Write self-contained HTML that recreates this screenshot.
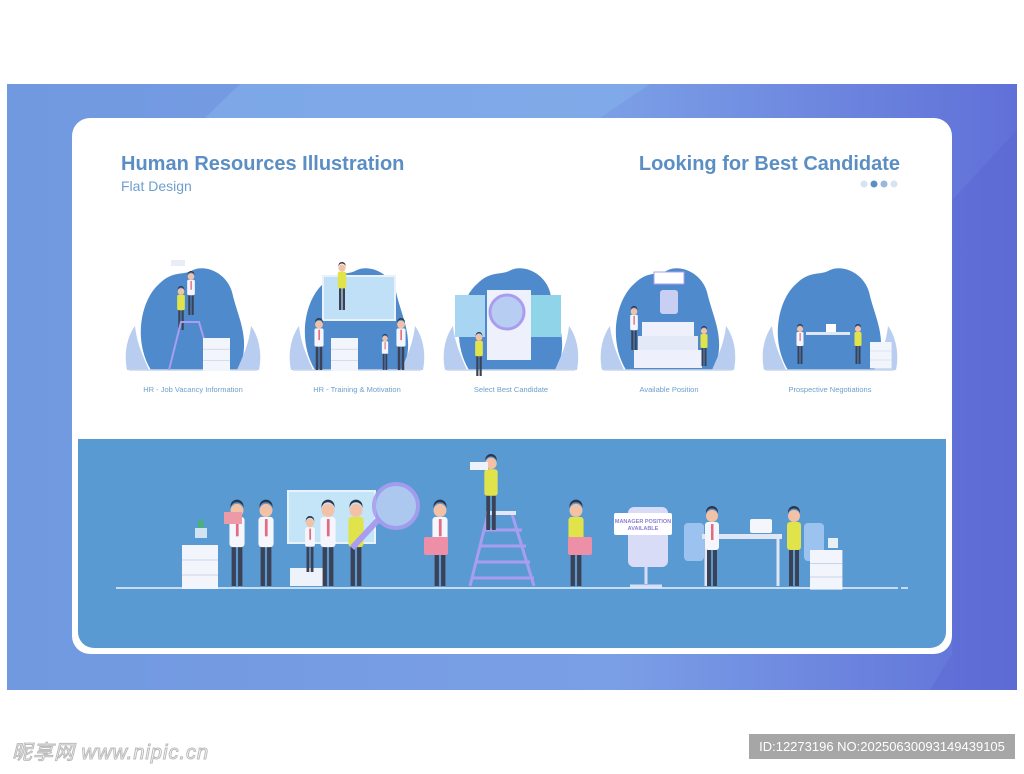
<!DOCTYPE html>
<html><head><meta charset="utf-8"><style>
html,body{margin:0;padding:0;background:#fff;width:1024px;height:774px;overflow:hidden;font-family:"Liberation Sans",sans-serif}
.wm{position:absolute;left:12px;top:736px;font-family:"Liberation Sans","Noto Sans CJK SC",sans-serif;font-size:20px;color:#fff;-webkit-text-stroke:1px #bbb;font-style:italic;letter-spacing:1px}
.id{position:absolute;left:749px;top:734px;width:266px;height:25px;background:#a6a6a6;color:#fff;font-size:13px;line-height:25px;text-align:center}
</style></head><body>
<svg width="1024" height="774" style="position:absolute;left:0;top:0" xmlns="http://www.w3.org/2000/svg">
<defs>
<linearGradient id="bg" x1="0" x2="1" y1="0" y2="0"><stop offset="0" stop-color="#7099e0"/><stop offset="0.6" stop-color="#7b9fe6"/><stop offset="1" stop-color="#6070d8"/></linearGradient>
<g id="p"><!-- person -->
<rect x="-5" y="-38" width="4" height="38" fill="#3b4256"/><rect x="1" y="-38" width="4" height="38" fill="#3b4256"/>
<rect x="-7" y="-64" width="14" height="28" rx="3" fill="#f4f6fb"/>
<rect x="-1" y="-62" width="2.5" height="16" fill="#e46a82"/>
<circle cx="0" cy="-70" r="6" fill="#f3c2a6"/><path d="M-6,-71 a6,6 0 0 1 12,-1 l0,-2 a6,6 0 0 0 -12,0z" fill="#2f3548"/>
</g>
<g id="py">
<rect x="-5" y="-38" width="4" height="38" fill="#3b4256"/><rect x="1" y="-38" width="4" height="38" fill="#3b4256"/>
<rect x="-7" y="-64" width="14" height="28" rx="3" fill="#e0e34a"/>
<circle cx="0" cy="-70" r="6" fill="#f3c2a6"/><path d="M-6,-71 a6,6 0 0 1 12,-1 l0,-2 a6,6 0 0 0 -12,0z" fill="#2f3548"/>
</g>
<g id="drw"><rect x="0" y="0" width="36" height="44" fill="#f2f5fb"/><line x1="0" y1="15" x2="36" y2="15" stroke="#c9d4e8"/><line x1="0" y1="30" x2="36" y2="30" stroke="#c9d4e8"/></g>
<g id="blob"><path d="M-42,50 C-60,20 -52,-20 -34,-36 C-20,-50 -10,-44 0,-50 C14,-56 36,-46 40,-24 C46,0 58,20 46,50Z" fill="#4f8bcc"/>
<path d="M-66,50 C-70,30 -64,14 -58,6 C-56,24 -50,36 -44,50Z" fill="#b8cdf0"/><path d="M66,50 C70,30 64,14 58,6 C56,24 50,36 44,50Z" fill="#b8cdf0"/>
<line x1="-64" y1="50" x2="64" y2="50" stroke="#c9d6ea" stroke-width="1.5"/></g>
</defs>
<rect x="7" y="84" width="1010" height="606" fill="url(#bg)"/>
<path d="M240,84 L650,84 L600,118 L205,118Z" fill="#86b3ec" opacity="0.5"/>
<path d="M952,200 L1017,130 L1017,690 L930,690 L952,654Z" fill="#5a63d2" opacity="0.4"/>
<rect x="72" y="118" width="880" height="536" rx="18" fill="#fff"/>
<path d="M78,439 H946 V632 a16,16 0 0 1 -16,16 H94 a16,16 0 0 1 -16,-16Z" fill="#5a9ad3"/>
<text x="121" y="170" font-size="20" font-weight="bold" fill="#5b8fc4">Human Resources Illustration</text>
<text x="121" y="191" font-size="14" fill="#6d9fce">Flat Design</text>
<text x="900" y="170" font-size="20" font-weight="bold" fill="#5b8fc4" text-anchor="end">Looking for Best Candidate</text>
<circle cx="864" cy="184" r="3.5" fill="#d6e3f3"/><circle cx="874" cy="184" r="3.5" fill="#5b8fc4"/><circle cx="884" cy="184" r="3.5" fill="#98b8de"/><circle cx="894" cy="184" r="3.5" fill="#d6e3f3"/>
<!-- small scenes -->
<g transform="translate(193,320)"><use href="#blob"/><use href="#py" transform="translate(-12,10) scale(0.55)"/><use href="#p" transform="translate(-2,-5) scale(0.55)"/><path d="M-24,50 L-12,2 L6,2 L20,50" stroke="#a99df0" stroke-width="2" fill="none"/><use href="#drw" transform="translate(10,18) scale(0.75)"/><rect x="-22" y="-60" width="14" height="6" fill="#e8edf7"/></g>
<g transform="translate(357,320)"><use href="#blob"/><rect x="-34" y="-44" width="72" height="44" fill="#bfe0f7" stroke="#eaf1fb" stroke-width="2"/><use href="#py" transform="translate(-15,-10) scale(0.6)"/><use href="#drw" transform="translate(-26,18) scale(0.75)"/><use href="#p" transform="translate(-38,50) scale(0.65)"/><use href="#p" transform="translate(44,50) scale(0.65)"/><use href="#p" transform="translate(28,50) scale(0.45)"/></g>
<g transform="translate(511,320)"><use href="#blob"/><rect x="-56" y="-25" width="30" height="42" fill="#a8d6f2"/><rect x="20" y="-25" width="30" height="42" fill="#8fd4e8"/><rect x="-24" y="-30" width="44" height="70" fill="#eef1fb"/><circle cx="-4" cy="-8" r="17" fill="#b7cdf2" stroke="#a99df0" stroke-width="3"/><use href="#py" transform="translate(-32,56) scale(0.55)"/></g>
<g transform="translate(668,320)"><use href="#blob"/><rect x="-26" y="2" width="52" height="14" fill="#eef1fb"/><rect x="-30" y="16" width="60" height="14" fill="#e3e9f6"/><rect x="-34" y="30" width="68" height="18" fill="#eef1fb"/><rect x="-14" y="-48" width="30" height="12" fill="#fff" stroke="#a99df0"/><rect x="-8" y="-30" width="18" height="24" rx="3" fill="#c9cff3"/><use href="#p" transform="translate(-34,30) scale(0.55)"/><use href="#py" transform="translate(36,46) scale(0.5)"/></g>
<g transform="translate(830,320)"><use href="#blob"/><rect x="-24" y="12" width="44" height="3" fill="#dfe6f4"/><rect x="-4" y="4" width="10" height="8" fill="#fff"/><use href="#p" transform="translate(-30,44) scale(0.5)"/><use href="#py" transform="translate(28,44) scale(0.5)"/><use href="#drw" transform="translate(40,22) scale(0.6)"/></g>
<g font-size="7.5" fill="#6d9fce" text-anchor="middle"><text x="193" y="392">HR - Job Vacancy Information</text><text x="357" y="392">HR - Training &amp; Motivation</text><text x="511" y="392">Select Best Candidate</text><text x="669" y="392">Available Position</text><text x="830" y="392">Prospective Negotiations</text></g>
<!-- banner scene -->
<line x1="116" y1="588" x2="898" y2="588" stroke="#e9f1fb" stroke-width="1.5"/><line x1="901" y1="588" x2="908" y2="588" stroke="#e9f1fb" stroke-width="1.5"/>
<use href="#drw" transform="translate(182,545)"/><rect x="195" y="528" width="12" height="10" fill="#cfe3f3"/><rect x="198" y="520" width="6" height="8" fill="#4caf84"/>
<rect x="288" y="491" width="87" height="52" fill="#c4e4f8" stroke="#e8f2fc" stroke-width="2"/>
<use href="#p" transform="translate(237,586) scale(1.08)"/><rect x="224" y="512" width="18" height="12" fill="#ec9aa8"/>
<use href="#p" transform="translate(266,586) scale(1.08)"/>
<rect x="290" y="568" width="36" height="18" fill="#eef2fa"/><use href="#p" transform="translate(310,572) scale(0.7)"/>
<use href="#p" transform="translate(328,586) scale(1.08)"/>
<use href="#py" transform="translate(356,586) scale(1.08)"/>
<circle cx="396" cy="506" r="22" fill="#b7cdf2" stroke="#a99df0" stroke-width="4" opacity="0.9"/><line x1="378" y1="520" x2="352" y2="548" stroke="#a99df0" stroke-width="6"/>
<use href="#p" transform="translate(440,586) scale(1.08)"/><rect x="424" y="537" width="24" height="18" rx="2" fill="#ec8fa7"/>
<path d="M470,586 L488,514 M534,586 L512,514 M484,530 L522,530 M480,546 L526,546 M476,562 L530,562 M472,578 L534,578" stroke="#a99df0" stroke-width="3"/>
<rect x="486" y="511" width="30" height="4" fill="#e3e6f8"/>
<use href="#py" transform="translate(491,530) scale(0.95)"/><rect x="470" y="462" width="18" height="8" fill="#eef2fa"/>
<use href="#py" transform="translate(576,586) scale(1.08)"/><rect x="568" y="537" width="24" height="18" rx="2" fill="#ec8fa7"/>
<rect x="628" y="507" width="40" height="60" rx="6" fill="#d8dcf6"/><rect x="614" y="513" width="58" height="22" rx="2" fill="#fff"/>
<text x="643" y="523" font-size="5.5" fill="#8a80d8" text-anchor="middle" font-weight="bold">MANAGER POSITION</text><text x="643" y="530" font-size="5.5" fill="#8a80d8" text-anchor="middle" font-weight="bold">AVAILABLE</text>
<path d="M646,567 L646,584 M630,586 L662,586" stroke="#d8dcf6" stroke-width="3"/>
<rect x="684" y="523" width="20" height="38" rx="4" fill="#9cc3f0"/><rect x="804" y="523" width="20" height="38" rx="4" fill="#9cc3f0"/>
<rect x="702" y="534" width="80" height="5" fill="#e1e6f4"/><path d="M706,539 V586 M778,539 V586" stroke="#e1e6f4" stroke-width="3"/>
<rect x="750" y="519" width="22" height="14" rx="2" fill="#f4f6fb"/>
<use href="#p" transform="translate(712,586) scale(1.0)"/><use href="#py" transform="translate(794,586) scale(1.0)"/>
<use href="#drw" transform="translate(810,550) scale(0.9)"/><rect x="828" y="538" width="10" height="10" fill="#e8f0f7"/>
</svg>
<div class="wm">昵享网 www.nipic.cn</div>
<div class="id">ID:12273196 NO:20250630093149439105</div>
</body></html>
